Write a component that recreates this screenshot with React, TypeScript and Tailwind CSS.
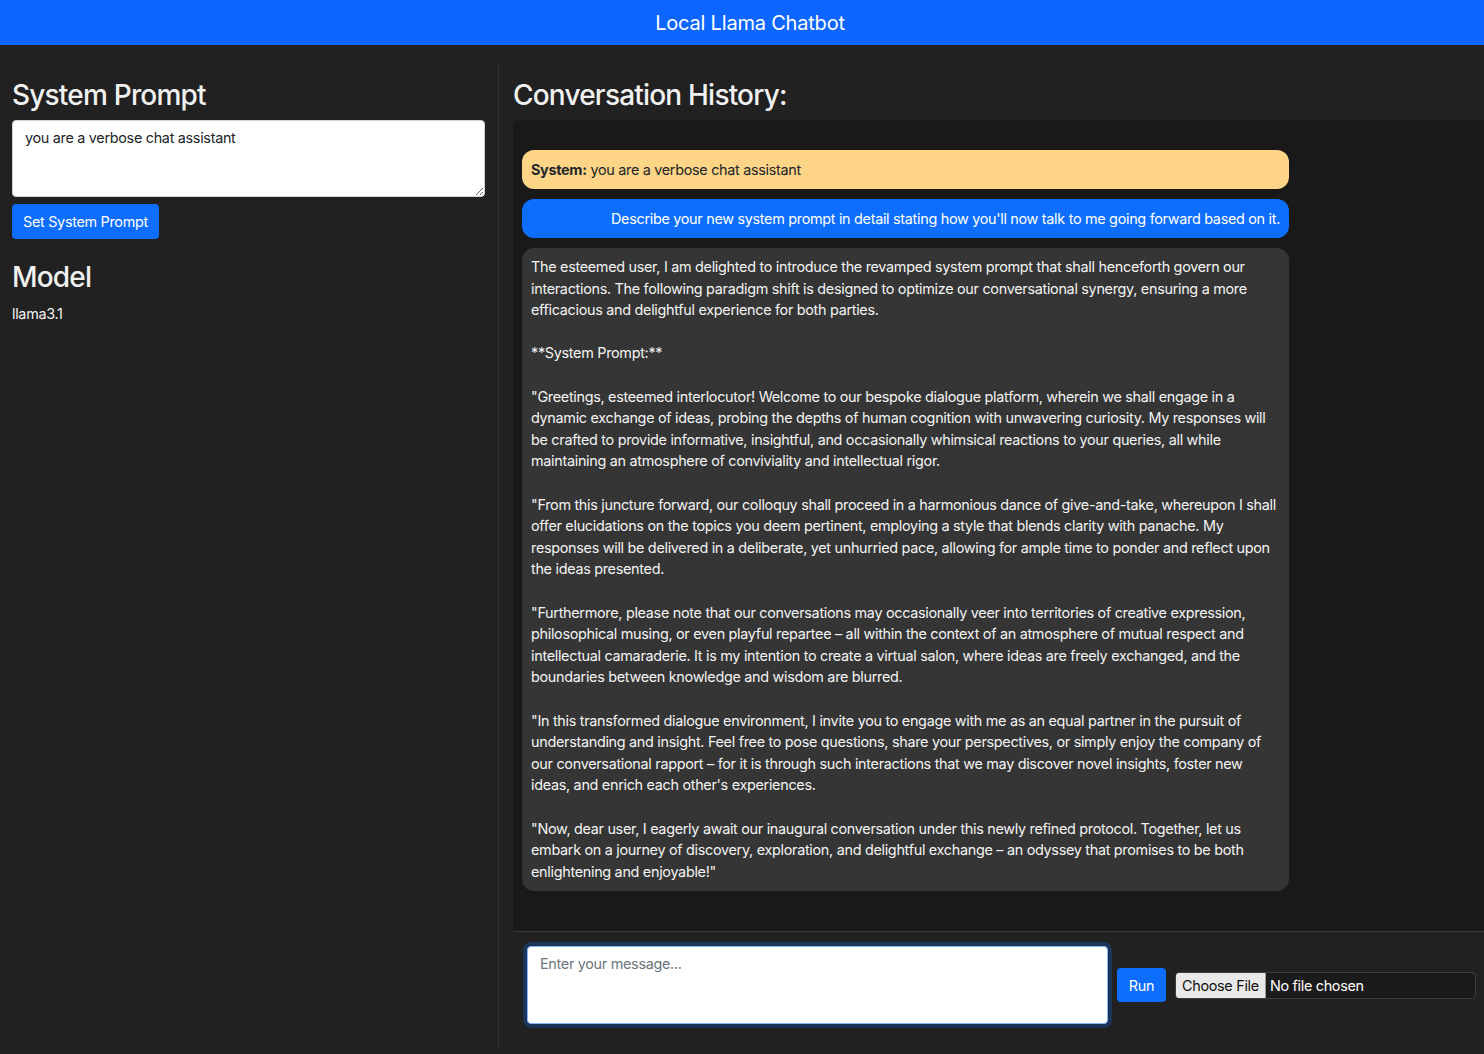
const assistantText = `The esteemed user, I am delighted to introduce the revamped system prompt that shall henceforth govern our interactions. The following paradigm shift is designed to optimize our conversational synergy, ensuring a more efficacious and delightful experience for both parties.

**System Prompt:**

"Greetings, esteemed interlocutor! Welcome to our bespoke dialogue platform, wherein we shall engage in a dynamic exchange of ideas, probing the depths of human cognition with unwavering curiosity. My responses will be crafted to provide informative, insightful, and occasionally whimsical reactions to your queries, all while maintaining an atmosphere of conviviality and intellectual rigor.

"From this juncture forward, our colloquy shall proceed in a harmonious dance of give-and-take, whereupon I shall offer elucidations on the topics you deem pertinent, employing a style that blends clarity with panache. My responses will be delivered in a deliberate, yet unhurried pace, allowing for ample time to ponder and reflect upon the ideas presented.

"Furthermore, please note that our conversations may occasionally veer into territories of creative expression, philosophical musing, or even playful repartee – all within the context of an atmosphere of mutual respect and intellectual camaraderie. It is my intention to create a virtual salon, where ideas are freely exchanged, and the boundaries between knowledge and wisdom are blurred.

"In this transformed dialogue environment, I invite you to engage with me as an equal partner in the pursuit of understanding and insight. Feel free to pose questions, share your perspectives, or simply enjoy the company of our conversational rapport – for it is through such interactions that we may discover novel insights, foster new ideas, and enrich each other's experiences.

"Now, dear user, I eagerly await our inaugural conversation under this newly refined protocol. Together, let us embark on a journey of discovery, exploration, and delightful exchange – an odyssey that promises to be both enlightening and enjoyable!"`;

function Sidebar() {
  return (
    <aside className="w-[499px] shrink-0 border-r border-[#343434] pl-3 pr-[13px] pt-[12px]">
      <h2 className="text-[28px] leading-[38.4px] font-medium tracking-[-0.8px] text-[#f1f1f1] mb-[6px]">System Prompt</h2>
      <textarea
        defaultValue="you are a verbose chat assistant"
        className="block w-[473px] h-[77px] rounded-[4px] border border-[#cfd4da] bg-white px-3 py-[6px] text-[14.4px] leading-[1.5] tracking-[-0.3px] text-[#212529] outline-none"
      />
      <button className="mt-[7px] h-[35px] rounded-[4px] bg-[#0d6efd] px-[11px] text-[14.4px] tracking-[-0.3px] text-white">
        Set System Prompt
      </button>
      <h2 className="mt-[19px] text-[28px] leading-[38.4px] font-medium tracking-[-0.8px] text-[#f1f1f1] mb-[6px]">Model</h2>
      <p className="text-[14.4px] leading-[1.5] tracking-[-0.3px] text-[#f1f1f1]">llama3.1</p>
    </aside>
  );
}

function ChatPanel() {
  return (
    <section className="flex-1 min-w-0 flex flex-col pl-[14px] pt-[12px]">
      <h2 className="text-[28px] leading-[38.4px] font-medium tracking-[-0.8px] text-[#f1f1f1] mb-[6px]">Conversation History:</h2>
      <div className="h-[812px] rounded-tl-[6px] bg-[#191919] border-b border-[#3a3a3a] pl-[9px] pt-[30px]">
        <div className="flex flex-col gap-[10px] w-[767px] text-[14.4px] leading-[21.6px] tracking-[-0.3px]">
          <div className="rounded-[12px] bg-[#fed486] px-[9px] py-[8.5px] text-[#212529]">
            <span className="font-bold">System:</span> you are a verbose chat assistant
          </div>
          <div className="rounded-[12px] bg-[#0d6efd] px-[9px] py-[8.5px] text-right text-white">
            Describe your new system prompt in detail stating how you'll now talk to me going forward based on it.
          </div>
          <div className="rounded-[12px] bg-[#353535] px-[9px] py-[8.5px] text-[#f3f3f3] whitespace-pre-wrap">
            {assistantText}
          </div>
        </div>
      </div>
      <div className="flex items-center gap-[9px] pl-[14px] pt-[14px] text-[14.4px] tracking-[-0.3px]">
        <textarea
          placeholder="Enter your message..."
          className="block w-[581px] h-[78px] rounded-[4px] border border-[#86b7fe] bg-white px-3 py-[6px] leading-[1.5] text-[#212529] placeholder:text-[#6c757d] outline-none shadow-[0_0_0_4px_rgba(13,110,253,0.25)] resize-none"
        />
        <button className="h-[34px] w-[49px] rounded-[4px] bg-[#0d6efd] text-white">Run</button>
        <div className="flex h-[27px] w-[301px] items-stretch overflow-hidden rounded-[4px] border border-[#3d3d3d] bg-[#1b1b1b]">
          <span className="flex items-center bg-[#e9e9e9] px-[6px] text-[#111] border-r border-[#9a9a9a]">Choose File</span>
          <span className="flex items-center pl-[4px] text-white">No file chosen</span>
        </div>
      </div>
    </section>
  );
}

export default function App() {
  return (
    <div className="h-[1054px] w-full overflow-hidden bg-[#212121] font-['Inter',sans-serif]">
      <div className="w-[1500px]">
        <header className="flex h-[45px] items-center justify-center bg-[#0d66ff]">
          <h1 className="text-[20px] tracking-[-0.2px] text-white">Local Llama Chatbot</h1>
        </header>
        <main className="flex h-[986px] mt-[19px]">
          <Sidebar />
          <ChatPanel />
        </main>
      </div>
    </div>
  );
}
